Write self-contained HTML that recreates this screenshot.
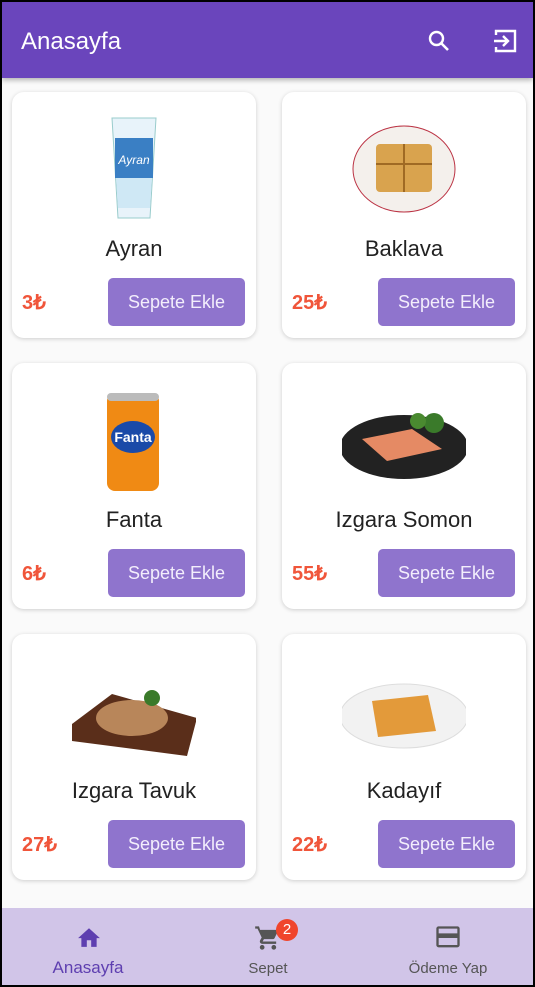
<!DOCTYPE html>
<html><head><meta charset="utf-8"><style>
*{margin:0;padding:0;box-sizing:border-box}
body{width:535px;height:987px;background:#000;position:relative;overflow:hidden;font-family:"Liberation Sans",sans-serif}
.page{position:absolute;left:2px;top:2px;width:531px;height:983px;background:#fafafa;overflow:hidden}
.bar{position:absolute;left:0;top:0;width:531px;height:76px;background:#6a45bc;box-shadow:0 2px 5px rgba(0,0,0,.3);z-index:2}
.bar h1{position:absolute;left:19px;top:26px;color:#fff;font-size:24px;font-weight:normal}
.card{position:absolute;width:244px;height:246px;background:#fff;border-radius:12px;box-shadow:0 1px 4px rgba(0,0,0,.18)}
.name{position:absolute;left:0;width:100%;top:144px;text-align:center;font-size:22px;color:#222}
.price{position:absolute;left:10px;top:198px;font-size:20px;font-weight:bold;color:#f0553a}
.btn{position:absolute;left:96px;top:186px;width:137px;height:48px;background:#8f74cd;border-radius:5px;color:#f3eefc;font-size:18px;text-align:center;line-height:48px}
.img{position:absolute;left:60px;top:22px;width:124px;height:110px}
.nav{position:absolute;left:0;top:906px;width:531px;height:77px;background:#d1c5e8}
.ni{position:absolute;text-align:center;font-size:15px;color:#555}
</style></head><body>
<div class="page">
<div class="bar"><h1>Anasayfa</h1>
<svg style="position:absolute;left:425px;top:27px" width="24" height="24" viewBox="0 0 24 24"><circle cx="9.5" cy="9.5" r="6.5" fill="none" stroke="#fff" stroke-width="2.4"/><path d="M14 14l7 7" stroke="#fff" stroke-width="2.6"/></svg>
<svg style="position:absolute;left:491px;top:26px" width="26" height="26" viewBox="0 0 26 26"><path d="M3 7V3h19v20H3v-4" fill="none" stroke="#fff" stroke-width="2.4"/><path d="M1 13h14M10 8l5 5-5 5" fill="none" stroke="#fff" stroke-width="2.4"/></svg>
</div>

<div class="card" style="left:10px;top:90px">
<svg class="img" viewBox="0 0 124 110"><path d="M40 4h44l-6 100H46z" fill="#e8f3fa" stroke="#9cc" /><rect x="43" y="24" width="38" height="40" fill="#3a7fc4"/><path d="M44 64h36l-2 30H46z" fill="#cfe8f5"/><text x="62" y="50" font-size="12" fill="#fff" text-anchor="middle" font-style="italic">Ayran</text></svg>
<div class="name">Ayran</div><div class="price">3₺</div><div class="btn">Sepete Ekle</div></div>

<div class="card" style="left:280px;top:90px">
<svg class="img" viewBox="0 0 124 110"><ellipse cx="62" cy="55" rx="51" ry="43" fill="#f4f0ec" stroke="#b34" stroke-width="1"/><rect x="34" y="30" width="56" height="48" rx="4" fill="#d9a34e"/><path d="M34 50h56M62 30v48" stroke="#a06a24" stroke-width="2"/></svg>
<div class="name">Baklava</div><div class="price">25₺</div><div class="btn">Sepete Ekle</div></div>

<div class="card" style="left:10px;top:361px">
<svg class="img" viewBox="0 0 124 110"><rect x="35" y="8" width="52" height="98" rx="8" fill="#f08a14"/><rect x="35" y="8" width="52" height="8" rx="4" fill="#bbb"/><ellipse cx="61" cy="52" rx="22" ry="16" fill="#1a4aa8"/><text x="61" y="57" font-size="14" fill="#fff" text-anchor="middle" font-weight="bold">Fanta</text></svg>
<div class="name">Fanta</div><div class="price">6₺</div><div class="btn">Sepete Ekle</div></div>

<div class="card" style="left:280px;top:361px">
<svg class="img" viewBox="0 0 124 110"><ellipse cx="62" cy="62" rx="64" ry="32" fill="#222"/><path d="M20 54l50-10 30 20-55 12z" fill="#e58a64"/><circle cx="92" cy="38" r="10" fill="#3a7a2a"/><circle cx="76" cy="36" r="8" fill="#4a8a30"/></svg>
<div class="name">Izgara Somon</div><div class="price">55₺</div><div class="btn">Sepete Ekle</div></div>

<div class="card" style="left:10px;top:632px">
<svg class="img" viewBox="0 0 124 110"><path d="M0 68l40-30 85 24-10 38L0 85z" fill="#5a2e1a"/><ellipse cx="60" cy="62" rx="36" ry="18" fill="#b8865a"/><circle cx="80" cy="42" r="8" fill="#3a7a2a"/></svg>
<div class="name">Izgara Tavuk</div><div class="price">27₺</div><div class="btn">Sepete Ekle</div></div>

<div class="card" style="left:280px;top:632px">
<svg class="img" viewBox="0 0 124 110"><ellipse cx="62" cy="60" rx="64" ry="32" fill="#f2f2f2" stroke="#ddd"/><path d="M30 45l56-6 8 36-58 6z" fill="#e39a3a"/></svg>
<div class="name">Kadayıf</div><div class="price">22₺</div><div class="btn">Sepete Ekle</div></div>

<div class="nav">
<svg style="position:absolute;left:73px;top:17px" width="28" height="24" viewBox="0 0 24 22"><path d="M10 20v-6h4v6h5v-8h3L12 3 2 12h3v8z" fill="#5e3fb0"/></svg>
<div class="ni" style="left:0;width:172px;top:50px;color:#5e3fb0;font-size:17px">Anasayfa</div>
<svg style="position:absolute;left:252px;top:16px" width="28" height="28" viewBox="0 0 24 24"><path d="M7 18c-1.1 0-2 .9-2 2s.9 2 2 2 2-.9 2-2-.9-2-2-2zM1 2v2h2l3.6 7.6-1.4 2.4c-.1.3-.2.6-.2 1 0 1.1.9 2 2 2h12v-2H7.4l1.1-2h7.5c.8 0 1.4-.4 1.7-1L21 5H5.2l-.9-3zM17 18c-1.1 0-2 .9-2 2s.9 2 2 2 2-.9 2-2-.9-2-2-2z" fill="#555"/></svg>
<div style="position:absolute;left:274px;top:11px;width:22px;height:22px;border-radius:11px;background:#f0452c;color:#fff;font-size:15px;text-align:center;line-height:22px">2</div>
<div class="ni" style="left:180px;width:172px;top:52px">Sepet</div>
<svg style="position:absolute;left:432px;top:18px" width="28" height="24" viewBox="0 0 24 20"><path d="M20 0H4C2.9 0 2 .9 2 2v14c0 1.1.9 2 2 2h16c1.1 0 2-.9 2-2V2c0-1.1-.9-2-2-2zm0 16H4v-6h16zm0-10H4V2h16z" fill="#555"/></svg>
<div class="ni" style="left:360px;width:172px;top:52px">Ödeme Yap</div>
</div>
</div>
</body></html>
